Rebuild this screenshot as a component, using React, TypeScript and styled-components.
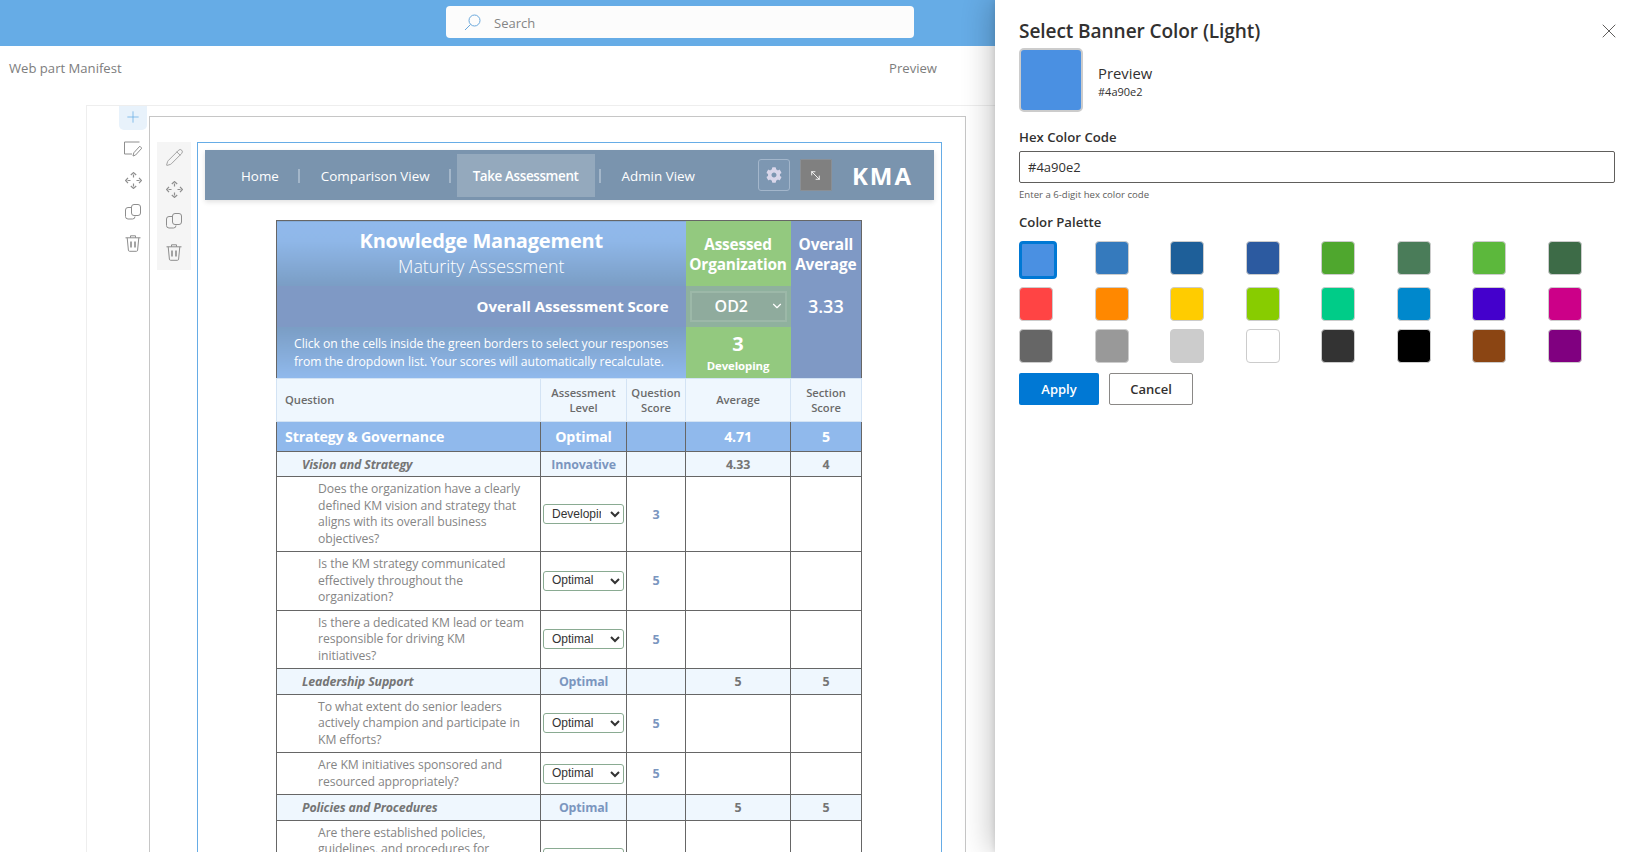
import React from "react";
import styled, { createGlobalStyle } from "styled-components";
import { FaCog } from "react-icons/fa";
import { ChevronDown, MoveDiagonal2, Pencil, Plus, X } from "lucide-react";

const FONT = `"Open Sans", "Noto Sans", "Liberation Sans", sans-serif`;

const Global = createGlobalStyle`
  html, body { margin: 0; padding: 0; background: #fff; }
  body { font-family: ${FONT}; color: #333; }
  * { box-sizing: border-box; }
`;

const Page = styled.div`
  position: relative;
  width: 100%;
  height: 100vh;
  overflow: hidden;
  background: #fff;
`;

const TopBar = styled.header`
  height: 46px;
  background: #66ace6;
  padding: 6px 0 0 446px;
`;

const SearchBox = styled.div`
  width: 468px;
  height: 32px;
  background: #fcfcfc;
  border-radius: 4px;
  display: flex;
  align-items: center;
  padding: 1px 0 0 18px;
  gap: 13px;
  font-size: 13px;
  color: #858585;
`;

const Workspace = styled.div`
  width: 995px;
`;

const CommandBar = styled.div`
  height: 59px;
  display: flex;
  justify-content: space-between;
  padding: 13px 58px 0 9px;
  font-size: 13.1px;
  line-height: 18px;
  color: #7d7d7d;
`;

const Canvas = styled.div`
  margin-left: 86px;
  border-left: 1px solid #eeeeee;
  border-top: 1px solid #eeeeee;
  display: flex;
  height: 760px;
`;

const Rail = styled.div`
  width: 28px;
  margin: 0 0 0 32px;
  display: flex;
  flex-direction: column;
  align-items: center;
`;

const AddTab = styled.div`
  width: 28px;
  height: 24px;
  background: #e8f2fb;
  border-radius: 0 0 5px 5px;
  color: #66ace6;
  display: flex;
  justify-content: center;
  padding-top: 2px;
  margin-bottom: 3px;
`;

const ToolSlot = styled.div`
  height: 31.5px;
  display: flex;
  align-items: center;
  justify-content: center;
  color: #8e8e8e;
`;

const Frame = styled.section`
  margin: 10px 0 0 2px;
  width: 817px;
  border: 1px solid #c6c6c6;
  border-bottom: 0;
  padding: 25px 0 0 7px;
  display: flex;
  align-items: flex-start;
`;

const PartTools = styled.div`
  width: 34px;
  height: 128px;
  background: #f5f5f5;
  display: flex;
  flex-direction: column;
  align-items: center;
`;

const PartBox = styled.div`
  margin-left: 6px;
  width: 745px;
  border: 1px solid #66ace6;
  border-bottom: 0;
  padding: 7px 7px 0;
  height: 720px;
`;

const Nav = styled.nav`
  height: 50px;
  background: #7a94ae;
  box-shadow: 0 2px 5px rgba(0, 0, 0, 0.12);
  display: flex;
  align-items: center;
  padding: 0 21px 0 21px;
  font-size: 13.4px;
  color: #fff;
`;

const NavItem = styled.div<{ $active?: boolean }>`
  height: 43px;
  padding: 0 ${(p) => (p.$active ? "16px" : "15px")};
  margin-top: 1px;
  display: flex;
  align-items: center;
  white-space: nowrap;
  font-weight: ${(p) => (p.$active ? 600 : 400)};
  background: ${(p) => (p.$active ? "#94a9bd" : "transparent")};
  letter-spacing: ${(p) => (p.$active ? "-0.35px" : "0")};
`;

const NavSep = styled.span`
  width: 2px;
  height: 14px;
  margin: 2px 6px 0 4px;
  background: #a3b6c9;
`;

const NavRight = styled.div`
  margin-left: auto;
  display: flex;
  align-items: center;
`;

const GearButton = styled.div`
  width: 32px;
  height: 32px;
  border: 1px solid #a3b6cb;
  border-radius: 3px;
  background: #7d97b2;
  color: #d9d6ea;
  display: flex;
  align-items: center;
  justify-content: center;
`;

const ExpandButton = styled.div`
  width: 32px;
  height: 32px;
  margin-left: 10px;
  background: #808080;
  border: 1px solid #8a8f95;
  border-radius: 1px;
  color: #fff;
  display: flex;
  align-items: center;
  justify-content: center;
`;

const Brand = styled.div`
  margin-left: 20px;
  font-size: 24px;
  font-weight: 700;
  letter-spacing: 2px;
  line-height: 32px;
  margin-top: 1px;
`;

const Sheet = styled.table`
  margin: 20px 0 0 71px;
  border-collapse: collapse;
  table-layout: fixed;
  width: 585px;
  border: 1px solid #666;
  font-size: 12px;
`;

const TitleCell = styled.td`
  height: 65px;
  text-align: center;
  color: #fff;
  background: linear-gradient(#90b9ec, #8fb7e8 30%, #7a9dc4);
  padding: 0;
  vertical-align: middle;
`;

const TitleMain = styled.div`
  font-size: 20px;
  line-height: 26px;
  font-weight: 700;
  letter-spacing: -0.2px;
`;

const TitleSub = styled.div`
  font-size: 17.8px;
  line-height: 25px;
  font-weight: 300;
`;

const GreenHead = styled.td`
  background: #93c97f;
  color: #fff;
  font-weight: 700;
  font-size: 15.4px;
  line-height: 19.5px;
  text-align: center;
  padding: 3px 0 0;
  white-space: nowrap;
  letter-spacing: -0.2px;
`;

const BlueHead = styled(GreenHead)`
  background: #7f99c5;
`;

const ScoreLabel = styled.td`
  height: 41px;
  background: #7f99c5;
  color: #fff;
  font-weight: 700;
  font-size: 15px;
  text-align: right;
  padding: 0 17px 0 0;
`;

const OrgCell = styled.td`
  background: #8fb19e;
  padding: 0 4px;
`;

const OrgWrap = styled.div`
  position: relative;
  height: 31px;
`;

const OrgSelect = styled.select`
  appearance: none;
  width: 100%;
  height: 31px;
  background: #8fab9d;
  border: 2px solid #9cb8a8;
  border-radius: 0;
  color: #fff;
  font-family: ${FONT};
  font-size: 16px;
  font-weight: 600;
  padding: 0 0 0 23px;
  outline: none;
`;

const OrgChevron = styled.span`
  position: absolute;
  right: 3px;
  top: 8px;
  color: #fff;
  display: flex;
`;

const AverageValue = styled.td`
  background: #7f99c5;
  color: #fff;
  font-weight: 600;
  font-size: 18px;
  text-align: center;
`;

const NoteCell = styled.td`
  height: 52px;
  background: linear-gradient(#7a9dc4, #90b9ec);
  color: #fff;
  font-size: 12.2px;
  line-height: 18px;
  font-weight: 400;
  padding: 2px 0 0 17px;
  white-space: nowrap;
  letter-spacing: -0.05px;
`;

const ResultCell = styled.td`
  background: #93c97f;
  color: #fff;
  text-align: center;
  font-weight: 700;
  padding-top: 2px;
`;

const ResultValue = styled.div`
  font-size: 20px;
  line-height: 26px;
`;

const ResultLabel = styled.div`
  font-size: 11.4px;
  line-height: 18px;
  letter-spacing: -0.1px;
`;

const BlankBlue = styled.td`
  background: #7f99c5;
`;

const ColHead = styled.td<{ $left?: boolean }>`
  height: 43px;
  background: #eff7fe;
  border: 1px solid #d3e3f4;
  color: #6b6b6b;
  font-weight: 600;
  font-size: 11.2px;
  line-height: 15px;
  text-align: ${(p) => (p.$left ? "left" : "center")};
  padding: ${(p) => (p.$left ? "0 0 1px 8px" : "0 0 1px")};
`;

const SectionCell = styled.td<{ $left?: boolean }>`
  height: 29.5px;
  background: #90b9ec;
  color: #fff;
  border: 1px solid #666;
  font-weight: 700;
  font-size: 14.2px;
  text-align: ${(p) => (p.$left ? "left" : "center")};
  padding: ${(p) => (p.$left ? "0 0 0 8px" : "0")};
  white-space: nowrap;
  letter-spacing: -0.15px;
`;

const SubCell = styled.td<{ $left?: boolean; $tone?: boolean }>`
  height: 25.5px;
  background: #eff7fe;
  border: 1px solid #666;
  color: ${(p) => (p.$tone ? "#7b96bf" : "#757575")};
  font-weight: 700;
  font-size: 12.4px;
  font-style: ${(p) => (p.$left ? "italic" : "normal")};
  text-align: ${(p) => (p.$left ? "left" : "center")};
  padding: ${(p) => (p.$left ? "1px 0 0 25px" : "1px 0 0")};
  white-space: nowrap;
  letter-spacing: -0.15px;
`;

const QuestionCell = styled.td`
  border: 1px solid #666;
  color: #858585;
  font-size: 12.2px;
  line-height: 16.5px;
  padding: 4px 15.5px 4px 41px;
  letter-spacing: -0.08px;
`;

const BodyCell = styled.td`
  border: 1px solid #666;
  text-align: center;
`;

const ScoreNum = styled(BodyCell)`
  color: #7b96bf;
  font-weight: 700;
  font-size: 12.5px;
`;

const LevelSelect = styled.select`
  display: block;
  width: 81px;
  height: 20px;
  margin: 0 auto;
  background: #fff;
  border: 1px solid #8aab92;
  border-radius: 3px;
  color: #333;
  font-family: "Liberation Sans", sans-serif;
  font-size: 12px;
  padding: 0 6px 1px 4px;
`;

const Panel = styled.aside`
  position: absolute;
  top: 0;
  right: 0;
  width: 640px;
  height: 100%;
  background: #fff;
  box-shadow: -4px 0 28px rgba(0, 0, 0, 0.24), 0 0 6px rgba(0, 0, 0, 0.12);
  padding: 0 20px 0 24px;
  display: flex;
  flex-direction: column;
`;

const PanelHead = styled.div`
  height: 48px;
  display: flex;
  justify-content: space-between;
  align-items: center;
  padding-top: 14px;
`;

const PanelTitle = styled.h2`
  margin: 0;
  font-size: 19.1px;
  font-weight: 600;
  line-height: 24px;
  color: #323130;
  letter-spacing: -0.1px;
`;

const CloseIcon = styled.span`
  display: flex;
  color: #605e5c;
  margin-right: -6px;
`;

const PreviewRow = styled.div`
  display: flex;
  align-items: center;
  gap: 15px;
`;

const PreviewSwatch = styled.div`
  width: 64px;
  height: 64px;
  border: 2px solid #ccc;
  border-radius: 5px;
  background: #4a90e2;
`;

const PreviewText = styled.div`
  padding-top: 2px;
`;

const PreviewTitle = styled.div`
  font-size: 14.8px;
  line-height: 20px;
  color: #323130;
`;

const PreviewHex = styled.div`
  font-size: 11px;
  line-height: 16px;
  color: #323130;
  margin-top: 1px;
`;

const FieldLabel = styled.label<{ $top: number }>`
  display: block;
  font-size: 13.2px;
  font-weight: 600;
  line-height: 20px;
  color: #323130;
  margin-top: ${(p) => p.$top}px;
`;

const HexInput = styled.input`
  display: block;
  width: 596px;
  height: 32px;
  margin-top: 4px;
  border: 1px solid #605e5c;
  border-radius: 2px;
  padding: 0 8px;
  font-family: ${FONT};
  font-size: 13px;
  color: #323130;
  outline: none;
`;

const Hint = styled.div`
  font-size: 9.6px;
  line-height: 14px;
  margin-top: 5px;
  color: #605e5c;
`;

const Palette = styled.div`
  width: 596px;
  margin-top: 9px;
  display: grid;
  grid-template-columns: repeat(8, 1fr);
  gap: 8px;
  align-items: start;
`;

const Swatch = styled.div<{ $color: string; $selected?: boolean }>`
  width: ${(p) => (p.$selected ? 38 : 34)}px;
  height: ${(p) => (p.$selected ? 38 : 34)}px;
  border: ${(p) => (p.$selected ? "3px solid #0078d4" : "1px solid #ccc")};
  border-radius: 4px;
  background: ${(p) => p.$color};
`;

const Actions = styled.div`
  display: flex;
  gap: 10px;
  margin-top: 10px;
`;

const PrimaryButton = styled.button`
  width: 80px;
  height: 32px;
  background: #0078d4;
  color: #fff;
  border: 0;
  border-radius: 2px;
  font-family: ${FONT};
  font-size: 13px;
  font-weight: 600;
`;

const SecondaryButton = styled.button`
  width: 84px;
  height: 32px;
  background: #fff;
  color: #323130;
  border: 1px solid #8a8886;
  border-radius: 2px;
  font-family: ${FONT};
  font-size: 13px;
  font-weight: 600;
`;

const line = { fill: "none", stroke: "currentColor", strokeWidth: 1 } as const;

const SearchGlyph = () => (
  <svg width="17" height="17" viewBox="0 0 17 17" style={{ color: "#6aa8dc" }}>
    <circle cx="10.5" cy="6.5" r="5.5" {...line} />
    <path d="M6.5 10.5L1 16" {...line} />
  </svg>
);

const NoteGlyph = () => (
  <svg width="18" height="16" viewBox="0 0 18 16">
    <path d="M15.5 1H.5v12H8" {...line} />
    <path d="M9 15l.8-3.2L15.8 5.2l2 2L11.6 14z" {...line} />
  </svg>
);

const MoveGlyph = () => (
  <svg width="17" height="17" viewBox="0 0 17 17">
    <path d="M5.8 3L8.5 .6 11.2 3M5.8 14l2.7 2.4 2.7-2.4M3 5.8L.6 8.5 3 11.2M14 5.8l2.4 2.7-2.4 2.7" {...line} strokeWidth={1.2} />
    <path d="M8.5 2.5v3M8.5 11.5v3M2.5 8.5h3M11.5 8.5h3" {...line} strokeWidth={1.2} />
  </svg>
);

const CopyGlyph = () => (
  <svg width="16" height="16" viewBox="0 0 16 16">
    <rect x="6.5" y=".5" width="9" height="11" rx="2.5" {...line} />
    <path d="M6 3.5H3A2.5 2.5 0 0 0 .5 6v6.5A2.5 2.5 0 0 0 3 15h4.5a2.5 2.5 0 0 0 2.5-2.5" {...line} />
  </svg>
);

const TrashGlyph = () => (
  <svg width="16" height="17" viewBox="0 0 16 17">
    <path d="M.5 2.8h15M5.5 2.8V.8h5v2M2.2 2.8l1.2 12.4a1.2 1.2 0 0 0 1.2 1.1h6.8a1.2 1.2 0 0 0 1.2-1.1l1.2-12.4" {...line} />
    <path d="M6 6.5v6M10 6.5v6" {...line} strokeWidth={1.6} />
  </svg>
);

type Row =
  | { kind: "section"; label: string; level: string; avg: string; score: string }
  | { kind: "sub"; label: string; level: string; avg: string; score: string }
  | { kind: "q"; text: string; answer: string; score: string };

const rows: Row[] = [
  { kind: "section", label: "Strategy & Governance", level: "Optimal", avg: "4.71", score: "5" },
  { kind: "sub", label: "Vision and Strategy", level: "Innovative", avg: "4.33", score: "4" },
  {
    kind: "q",
    text: "Does the organization have a clearly defined KM vision and strategy that aligns with its overall business objectives?",
    answer: "Developing",
    score: "3",
  },
  {
    kind: "q",
    text: "Is the KM strategy communicated effectively throughout the organization?",
    answer: "Optimal",
    score: "5",
  },
  {
    kind: "q",
    text: "Is there a dedicated KM lead or team responsible for driving KM initiatives?",
    answer: "Optimal",
    score: "5",
  },
  { kind: "sub", label: "Leadership Support", level: "Optimal", avg: "5", score: "5" },
  {
    kind: "q",
    text: "To what extent do senior leaders actively champion and participate in KM efforts?",
    answer: "Optimal",
    score: "5",
  },
  {
    kind: "q",
    text: "Are KM initiatives sponsored and resourced appropriately?",
    answer: "Optimal",
    score: "5",
  },
  { kind: "sub", label: "Policies and Procedures", level: "Optimal", avg: "5", score: "5" },
  {
    kind: "q",
    text: "Are there established policies, guidelines, and procedures for knowledge creation, sharing, and reuse across teams?",
    answer: "Optimal",
    score: "5",
  },
];

const levels = ["Initial", "Developing", "Defined", "Managed", "Optimal"];

const palette = [
  "#4a90e2", "#357abd", "#1e5f99", "#2c5aa0", "#4fa72e", "#4a7c59", "#5cb83c", "#3d6b47",
  "#ff4444", "#ff8800", "#ffcc00", "#88cc00", "#00cc88", "#0088cc", "#4400cc", "#cc0088",
  "#666666", "#999999", "#cccccc", "#ffffff", "#333333", "#000000", "#8b4513", "#800080",
];

const Tools = () => (
  <>
    <ToolSlot><MoveGlyph /></ToolSlot>
    <ToolSlot><CopyGlyph /></ToolSlot>
    <ToolSlot><TrashGlyph /></ToolSlot>
  </>
);

export default function App() {
  return (
    <Page>
      <Global />
      <TopBar>
        <SearchBox>
          <SearchGlyph />
          Search
        </SearchBox>
      </TopBar>
      <Workspace>
        <CommandBar>
          <span>Web part Manifest</span>
          <span>Preview</span>
        </CommandBar>
        <Canvas>
          <Rail>
            <AddTab><Plus size={18} strokeWidth={1} /></AddTab>
            <ToolSlot><NoteGlyph /></ToolSlot>
            <Tools />
          </Rail>
          <Frame>
            <PartTools>
              <ToolSlot><Pencil size={19} strokeWidth={1} /></ToolSlot>
              <Tools />
            </PartTools>
            <PartBox>
              <Nav>
                <NavItem>Home</NavItem>
                <NavSep />
                <NavItem>Comparison View</NavItem>
                <NavSep />
                <NavItem $active>Take Assessment</NavItem>
                <NavSep />
                <NavItem>Admin View</NavItem>
                <NavRight>
                  <GearButton><FaCog size={16} /></GearButton>
                  <ExpandButton><MoveDiagonal2 size={13} strokeWidth={1.6} /></ExpandButton>
                  <Brand>KMA</Brand>
                </NavRight>
              </Nav>
              <Sheet>
                <colgroup>
                  <col style={{ width: 264 }} />
                  <col style={{ width: 86 }} />
                  <col style={{ width: 59 }} />
                  <col style={{ width: 105 }} />
                  <col style={{ width: 71 }} />
                </colgroup>
                <tbody>
                  <tr>
                    <TitleCell colSpan={3}>
                      <TitleMain>Knowledge Management</TitleMain>
                      <TitleSub>Maturity Assessment</TitleSub>
                    </TitleCell>
                    <GreenHead>Assessed<br />Organization</GreenHead>
                    <BlueHead>Overall<br />Average</BlueHead>
                  </tr>
                  <tr>
                    <ScoreLabel colSpan={3}>Overall Assessment Score</ScoreLabel>
                    <OrgCell>
                      <OrgWrap>
                        <OrgSelect defaultValue="OD2">
                          <option>OD1</option>
                          <option>OD2</option>
                          <option>OD3</option>
                        </OrgSelect>
                        <OrgChevron><ChevronDown size={14} strokeWidth={2} /></OrgChevron>
                      </OrgWrap>
                    </OrgCell>
                    <AverageValue>3.33</AverageValue>
                  </tr>
                  <tr>
                    <NoteCell colSpan={3}>
                      Click on the cells inside the green borders to select your responses<br />
                      from the dropdown list. Your scores will automatically recalculate.
                    </NoteCell>
                    <ResultCell>
                      <ResultValue>3</ResultValue>
                      <ResultLabel>Developing</ResultLabel>
                    </ResultCell>
                    <BlankBlue />
                  </tr>
                  <tr>
                    <ColHead $left>Question</ColHead>
                    <ColHead>Assessment<br />Level</ColHead>
                    <ColHead>Question<br />Score</ColHead>
                    <ColHead>Average</ColHead>
                    <ColHead>Section<br />Score</ColHead>
                  </tr>
                  {rows.map((r, i) => {
                    if (r.kind === "section") {
                      return (
                        <tr key={i}>
                          <SectionCell $left>{r.label}</SectionCell>
                          <SectionCell>{r.level}</SectionCell>
                          <SectionCell />
                          <SectionCell>{r.avg}</SectionCell>
                          <SectionCell>{r.score}</SectionCell>
                        </tr>
                      );
                    }
                    if (r.kind === "sub") {
                      return (
                        <tr key={i}>
                          <SubCell $left>{r.label}</SubCell>
                          <SubCell $tone>{r.level}</SubCell>
                          <SubCell />
                          <SubCell>{r.avg}</SubCell>
                          <SubCell>{r.score}</SubCell>
                        </tr>
                      );
                    }
                    return (
                      <tr key={i}>
                        <QuestionCell>{r.text}</QuestionCell>
                        <BodyCell>
                          <LevelSelect defaultValue={r.answer}>
                            {levels.map((l) => (
                              <option key={l}>{l}</option>
                            ))}
                          </LevelSelect>
                        </BodyCell>
                        <ScoreNum>{r.score}</ScoreNum>
                        <BodyCell />
                        <BodyCell />
                      </tr>
                    );
                  })}
                </tbody>
              </Sheet>
            </PartBox>
          </Frame>
        </Canvas>
      </Workspace>
      <Panel>
        <PanelHead>
          <PanelTitle>Select Banner Color (Light)</PanelTitle>
          <CloseIcon><X size={24} strokeWidth={1} /></CloseIcon>
        </PanelHead>
        <PreviewRow>
          <PreviewSwatch />
          <PreviewText>
            <PreviewTitle>Preview</PreviewTitle>
            <PreviewHex>#4a90e2</PreviewHex>
          </PreviewText>
        </PreviewRow>
        <FieldLabel $top={15}>Hex Color Code</FieldLabel>
        <HexInput defaultValue="#4a90e2" />
        <Hint>Enter a 6-digit hex color code</Hint>
        <FieldLabel $top={10}>Color Palette</FieldLabel>
        <Palette>
          {palette.map((c, i) => (
            <Swatch key={c} $color={c} $selected={i === 0} />
          ))}
        </Palette>
        <Actions>
          <PrimaryButton>Apply</PrimaryButton>
          <SecondaryButton>Cancel</SecondaryButton>
        </Actions>
      </Panel>
    </Page>
  );
}
